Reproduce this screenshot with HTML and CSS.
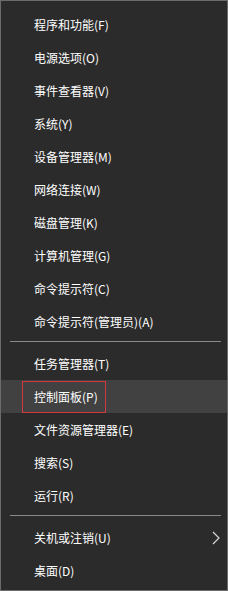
FILE: index.html
```html
<!doctype html>
<html>
	<head>
		<meta charset="utf-8" />
		<title>Win+X</title>
		<link rel="stylesheet" href="styles.css">
	</head>
	<body>
		<div class="menu">
			<div class="item">程序和功能(F)</div>
			<div class="item">电源选项(O)</div>
			<div class="item">事件查看器(V)</div>
			<div class="item">系统(Y)</div>
			<div class="item">设备管理器(M)</div>
			<div class="item">网络连接(W)</div>
			<div class="item">磁盘管理(K)</div>
			<div class="item">计算机管理(G)</div>
			<div class="item">命令提示符(C)</div>
			<div class="item">命令提示符(管理员)(A)</div>
			<div class="sep"></div>
			<div class="item">任务管理器(T)</div>
			<div class="item hover">控制面板(P)<span class="mark"></span></div>
			<div class="item">文件资源管理器(E)</div>
			<div class="item">搜索(S)</div>
			<div class="item">运行(R)</div>
			<div class="sep"></div>
			<div class="item sub">关机或注销(U)
				<svg class="chev" width="8" height="14" viewBox="0 0 8 14"><polyline points="1,1 7,7 1,13" fill="none" stroke="#d8d8d8" stroke-width="1.2"/></svg>
			</div>
			<div class="item">桌面(D)</div>
		</div>
	</body>
</html>
```

FILE: styles.css
```css
body {
	margin: 0;
	background-color: #2b2b2b;
	font-family: "Noto Sans CJK SC", "Microsoft YaHei", sans-serif;
}
.menu {
	box-sizing: border-box;
	width: 228px;
	height: 591px;
	border: 1px solid #6b6b6b;
	background-color: #2b2b2b;
	padding: 7px 0 3px 0;
	color: #fff;
	font-size: 12px;
}
.item {
	position: relative;
	display: flex;
	align-items: center;
	height: 33px;
	padding-left: 33px;
	white-space: nowrap;
}
.item.hover {
	background-color: #414141;
}
.mark {
	position: absolute;
	left: 21px;
	top: 1px;
	width: 82px;
	height: 30px;
	border: 1px solid #cf3a3f;
}
.sub .chev {
	margin-left: auto;
	margin-right: 7px;
}
.sep {
	height: 1px;
	margin: 3px 6px 5px 9px;
	background-color: #8a8a8a;
}
```
